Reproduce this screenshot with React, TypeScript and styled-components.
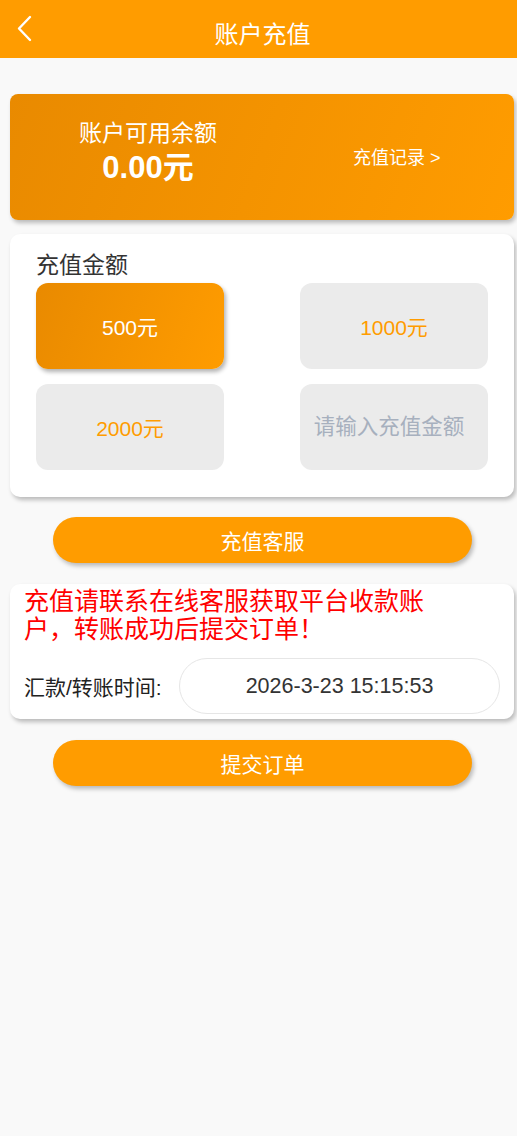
import React from 'react';
import styled, { createGlobalStyle } from 'styled-components';

const GlobalStyle = createGlobalStyle`
  html, body {
    margin: 0;
    padding: 0;
    background: #f9f9f9;
    font-family: "Liberation Sans", "Noto Sans CJK SC", sans-serif;
  }
`;

const Page = styled.div`
  width: 517px;
  min-height: 1136px;
  background: #f9f9f9;
`;

const Header = styled.div`
  height: 58px;
  background: #ff9c00;
  display: flex;
  align-items: center;
  justify-content: center;
  position: relative;
  color: #fff;
  font-size: 24px;
`;

const Back = styled.div`
  position: absolute;
  left: 14px;
  top: 14px;
  width: 22px;
  height: 30px;
`;

const Title = styled.div`
  margin-top: 6px;
  margin-left: 8px;
`;

const Content = styled.div`
  padding: 36px 3px 0 10px;
  display: flex;
  flex-direction: column;
`;

const BalanceCard = styled.div`
  height: 126px;
  border-radius: 8px;
  background: linear-gradient(110deg, #e98a00 0%, #ff9c00 100%);
  box-shadow: 2px 3px 4px rgba(0, 0, 0, 0.25);
  display: flex;
  align-items: center;
  color: #fff;
`;

const BalanceLeft = styled.div`
  width: 276px;
  display: flex;
  flex-direction: column;
  align-items: center;
  margin-top: -10px;
`;

const BalanceLabel = styled.div`
  font-size: 23px;
  line-height: 28px;
`;

const BalanceValue = styled.div`
  font-size: 31px;
  font-weight: bold;
  line-height: 36px;
  margin-top: 3px;
`;

const RecordLink = styled.div`
  font-size: 18px;
  margin-left: 67px;
  margin-top: -2px;
`;

const Card = styled.div<{ $pad: string }>`
  background: #fff;
  border-radius: 10px;
  box-shadow: 2px 3px 4px rgba(0, 0, 0, 0.25);
  padding: ${(p) => p.$pad};
`;

const AmountCard = styled(Card)`
  margin-top: 14px;
`;

const SectionTitle = styled.div`
  font-size: 23px;
  color: #333;
  line-height: 26px;
  margin-bottom: 5px;
`;

const Grid = styled.div`
  display: grid;
  grid-template-columns: 188px 188px;
  justify-content: space-between;
  row-gap: 15px;
  padding-right: 26px;
`;

const Option = styled.div<{ $active?: boolean }>`
  height: 86px;
  border-radius: 12px;
  display: flex;
  align-items: center;
  justify-content: center;
  font-size: 21px;
  color: ${(p) => (p.$active ? '#fff' : '#ff9c00')};
  background: ${(p) =>
    p.$active ? 'linear-gradient(110deg, #e98a00 0%, #ff9c00 100%)' : '#ebebeb'};
  box-shadow: ${(p) => (p.$active ? '2px 3px 4px rgba(0, 0, 0, 0.3)' : 'none')};
`;

const AmountInput = styled.input`
  height: 86px;
  border: none;
  outline: none;
  border-radius: 12px;
  background: #ebebeb;
  text-align: center;
  font-size: 21.5px;
  font-family: inherit;
  padding: 0 10px 0 0;
  width: 100%;
  box-sizing: border-box;
  &::placeholder {
    color: #a7b0be;
  }
`;

const PillButton = styled.div`
  margin: 0 42px 0 43px;
  height: 46px;
  border-radius: 23px;
  background: #ff9c00;
  box-shadow: 2px 3px 4px rgba(0, 0, 0, 0.25);
  color: #fff;
  font-size: 21px;
  display: flex;
  align-items: center;
  justify-content: center;
`;

const ServiceButton = styled(PillButton)`
  margin-top: 20px;
`;

const SubmitButton = styled(PillButton)`
  margin-top: 21px;
`;

const NoticeCard = styled(Card)`
  margin-top: 21px;
`;

const Notice = styled.div`
  color: #ff0000;
  font-size: 25px;
  line-height: 28px;
  width: 440px;
`;

const TimeRow = styled.div`
  display: flex;
  align-items: center;
  margin-top: 15px;
`;

const TimeLabel = styled.div`
  font-size: 21px;
  color: #222;
  width: 155px;
`;

const TimeField = styled.div`
  width: 319px;
  height: 54px;
  border: 1px solid #e6e6e6;
  border-radius: 28px;
  display: flex;
  align-items: center;
  justify-content: center;
  font-size: 21.5px;
  color: #333;
`;

const options = ['500元', '1000元', '2000元'];

export default function App() {
  return (
    <Page>
      <GlobalStyle />
      <Header>
        <Back>
          <svg width="22" height="30" viewBox="0 0 22 30">
            <path d="M16 3 L5 14.5 L16 26" stroke="#fff" strokeWidth="2.4" fill="none" strokeLinecap="round" strokeLinejoin="round" />
          </svg>
        </Back>
        <Title>账户充值</Title>
      </Header>
      <Content>
        <BalanceCard>
          <BalanceLeft>
            <BalanceLabel>账户可用余额</BalanceLabel>
            <BalanceValue>0.00元</BalanceValue>
          </BalanceLeft>
          <RecordLink>充值记录 &gt;</RecordLink>
        </BalanceCard>
        <AmountCard $pad="18px 0 27px 26px">
          <SectionTitle>充值金额</SectionTitle>
          <Grid>
            {options.map((o, i) => (
              <Option key={o} $active={i === 0}>
                {o}
              </Option>
            ))}
            <AmountInput placeholder="请输入充值金额" />
          </Grid>
        </AmountCard>
        <ServiceButton>充值客服</ServiceButton>
        <NoticeCard $pad="3px 0 5px 14px">
          <Notice>充值请联系在线客服获取平台收款账户，转账成功后提交订单！</Notice>
          <TimeRow>
            <TimeLabel>汇款/转账时间:</TimeLabel>
            <TimeField>2026-3-23 15:15:53</TimeField>
          </TimeRow>
        </NoticeCard>
        <SubmitButton>提交订单</SubmitButton>
      </Content>
    </Page>
  );
}
